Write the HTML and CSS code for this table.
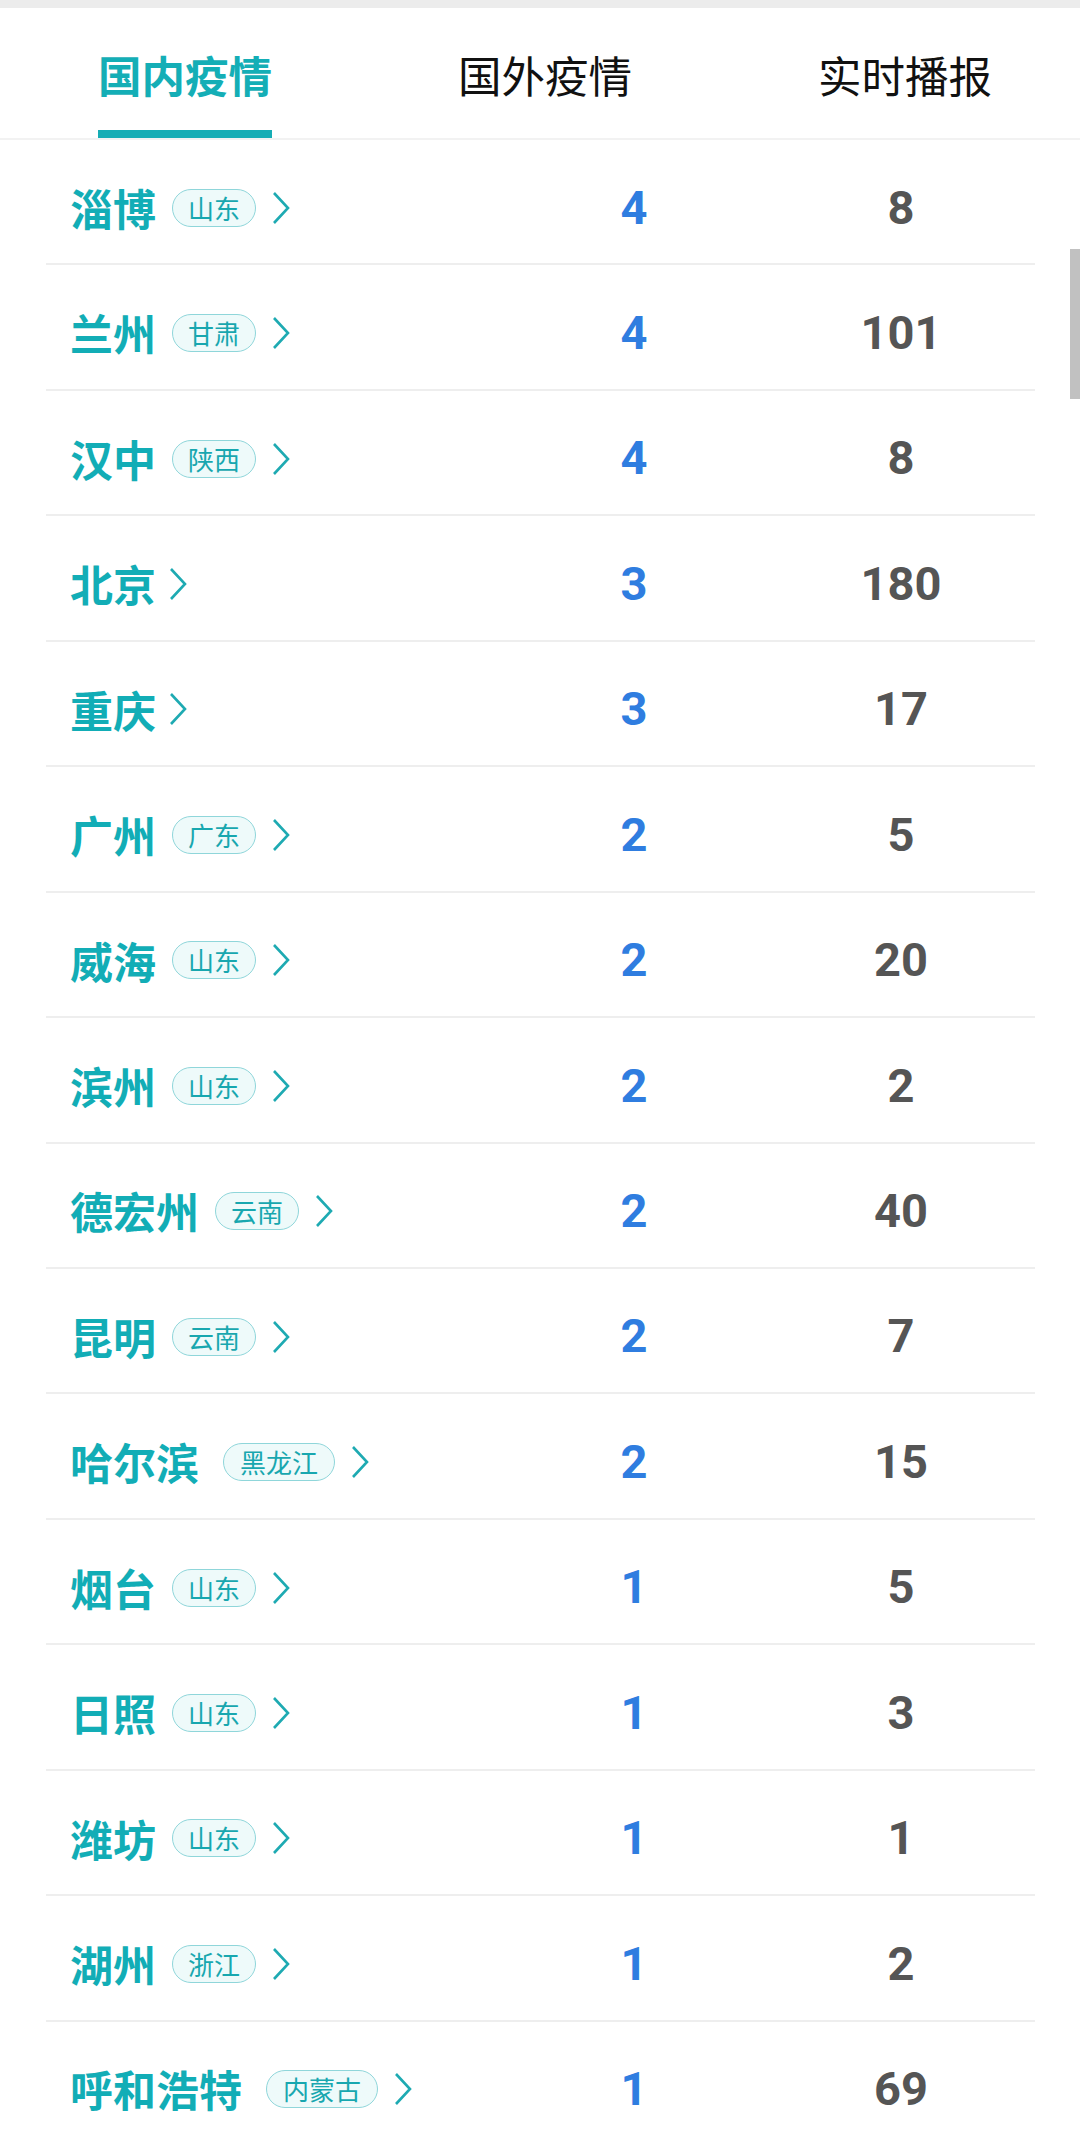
FILE: index.html
```html
<!DOCTYPE html>
<html lang="zh-CN">
<head>
    <meta charset="UTF-8">
    <meta name="viewport" content="width=device-width, initial-scale=1.0">
    <title>国内疫情</title>
    <link rel="stylesheet" href="styles.css">
</head>
<body>
    <div class="status-strip"></div>

    <!-- Tabs -->
    <div class="tabs">
        <div class="tab active"><span class="tab-label">国内疫情</span></div>
        <div class="tab"><span class="tab-label">国外疫情</span></div>
        <div class="tab"><span class="tab-label">实时播报</span></div>
    </div>

    <!-- City list -->
    <div class="city-list">
        <div class="row">
            <div class="city"><span class="name">淄博</span><span class="prov">山东</span><svg class="arrow" viewBox="0 0 18 34"><polyline points="2,2 16,17 2,32"/></svg></div>
            <div class="num new">4</div>
            <div class="num total">8</div>
        </div>
        <div class="row">
            <div class="city"><span class="name">兰州</span><span class="prov">甘肃</span><svg class="arrow" viewBox="0 0 18 34"><polyline points="2,2 16,17 2,32"/></svg></div>
            <div class="num new">4</div>
            <div class="num total">101</div>
        </div>
        <div class="row">
            <div class="city"><span class="name">汉中</span><span class="prov">陕西</span><svg class="arrow" viewBox="0 0 18 34"><polyline points="2,2 16,17 2,32"/></svg></div>
            <div class="num new">4</div>
            <div class="num total">8</div>
        </div>
        <div class="row">
            <div class="city"><span class="name">北京</span><svg class="arrow" viewBox="0 0 18 34"><polyline points="2,2 16,17 2,32"/></svg></div>
            <div class="num new">3</div>
            <div class="num total">180</div>
        </div>
        <div class="row">
            <div class="city"><span class="name">重庆</span><svg class="arrow" viewBox="0 0 18 34"><polyline points="2,2 16,17 2,32"/></svg></div>
            <div class="num new">3</div>
            <div class="num total">17</div>
        </div>
        <div class="row">
            <div class="city"><span class="name">广州</span><span class="prov">广东</span><svg class="arrow" viewBox="0 0 18 34"><polyline points="2,2 16,17 2,32"/></svg></div>
            <div class="num new">2</div>
            <div class="num total">5</div>
        </div>
        <div class="row">
            <div class="city"><span class="name">威海</span><span class="prov">山东</span><svg class="arrow" viewBox="0 0 18 34"><polyline points="2,2 16,17 2,32"/></svg></div>
            <div class="num new">2</div>
            <div class="num total">20</div>
        </div>
        <div class="row">
            <div class="city"><span class="name">滨州</span><span class="prov">山东</span><svg class="arrow" viewBox="0 0 18 34"><polyline points="2,2 16,17 2,32"/></svg></div>
            <div class="num new">2</div>
            <div class="num total">2</div>
        </div>
        <div class="row">
            <div class="city"><span class="name">德宏州</span><span class="prov">云南</span><svg class="arrow" viewBox="0 0 18 34"><polyline points="2,2 16,17 2,32"/></svg></div>
            <div class="num new">2</div>
            <div class="num total">40</div>
        </div>
        <div class="row">
            <div class="city"><span class="name">昆明</span><span class="prov">云南</span><svg class="arrow" viewBox="0 0 18 34"><polyline points="2,2 16,17 2,32"/></svg></div>
            <div class="num new">2</div>
            <div class="num total">7</div>
        </div>
        <div class="row">
            <div class="city"><span class="name">哈尔滨</span><span class="prov wide">黑龙江</span><svg class="arrow" viewBox="0 0 18 34"><polyline points="2,2 16,17 2,32"/></svg></div>
            <div class="num new">2</div>
            <div class="num total">15</div>
        </div>
        <div class="row">
            <div class="city"><span class="name">烟台</span><span class="prov">山东</span><svg class="arrow" viewBox="0 0 18 34"><polyline points="2,2 16,17 2,32"/></svg></div>
            <div class="num new">1</div>
            <div class="num total">5</div>
        </div>
        <div class="row">
            <div class="city"><span class="name">日照</span><span class="prov">山东</span><svg class="arrow" viewBox="0 0 18 34"><polyline points="2,2 16,17 2,32"/></svg></div>
            <div class="num new">1</div>
            <div class="num total">3</div>
        </div>
        <div class="row">
            <div class="city"><span class="name">潍坊</span><span class="prov">山东</span><svg class="arrow" viewBox="0 0 18 34"><polyline points="2,2 16,17 2,32"/></svg></div>
            <div class="num new">1</div>
            <div class="num total">1</div>
        </div>
        <div class="row">
            <div class="city"><span class="name">湖州</span><span class="prov">浙江</span><svg class="arrow" viewBox="0 0 18 34"><polyline points="2,2 16,17 2,32"/></svg></div>
            <div class="num new">1</div>
            <div class="num total">2</div>
        </div>
        <div class="row">
            <div class="city"><span class="name">呼和浩特</span><span class="prov wide">内蒙古</span><svg class="arrow" viewBox="0 0 18 34"><polyline points="2,2 16,17 2,32"/></svg></div>
            <div class="num new">1</div>
            <div class="num total">69</div>
        </div>
    </div>

    <!-- Overlay scroll thumb -->
    <div class="scroll-thumb"></div>
</body>
</html>
```

FILE: styles.css
```css
* {
    margin: 0;
    padding: 0;
    box-sizing: border-box;
}

html, body {
    height: 100%;
    overflow: hidden;
}

body {
    font-family: "Noto Sans CJK SC", "Noto Sans", sans-serif;
    background-color: #fff;
    color: #111;
    position: relative;
}

.status-strip {
    height: 8px;
    background-color: #ececec;
}

/* Tabs */
.tabs {
    display: grid;
    grid-template-columns: repeat(3, 360px);
    height: 132px;
    padding-left: 5px;
    border-bottom: 2px solid #f2f2f2;
}

.tab {
    display: flex;
    justify-content: center;
    align-items: flex-end;
}

.tab-label {
    font-size: 43.5px;
    line-height: 52px;
    padding-bottom: 29px;
    border-bottom: 8px solid transparent;
    color: #111;
}

.tab.active .tab-label {
    color: #14aeb6;
    font-weight: bold;
    border-bottom-color: #16adb5;
}

/* City list */
.city-list {
    padding: 0 45px 0 46px;
}

.row {
    display: grid;
    grid-template-columns: 480px 216px 1fr;
    align-items: center;
    height: 125.45px;
    padding-top: 12px;
    border-bottom: 2px solid #eeeeee;
}

.city {
    display: flex;
    align-items: center;
    padding-left: 24px;
}

.name {
    font-size: 43px;
    font-weight: bold;
    color: #12adb6;
    line-height: 1.2;
}

.prov {
    margin-left: 16px;
    height: 38px;
    padding: 0 15px;
    border: 1.5px solid #8fd6da;
    border-radius: 19px;
    background-color: #eefafa;
    color: #18a7af;
    font-size: 26px;
    line-height: 35px;
}

.prov.wide {
    margin-left: 24px;
    padding: 0 16px;
}

.arrow {
    width: 18px;
    height: 34px;
    margin-left: 13px;
    fill: none;
    stroke: #1eaab2;
    stroke-width: 2.6;
}

.prov + .arrow {
    margin-left: 16px;
}

.num {
    font-family: Roboto, "Noto Sans", sans-serif;
    font-size: 47px;
    font-weight: bold;
    text-align: center;
    line-height: 1.2;
}

.num.new {
    color: #2f7de0;
}

.num.total {
    color: #555555;
    padding-left: 25px;
}

/* Scroll thumb overlay */
.scroll-thumb {
    position: absolute;
    top: 249px;
    right: 0;
    width: 10px;
    height: 150px;
    background-color: #c1c1c1;
}
```
